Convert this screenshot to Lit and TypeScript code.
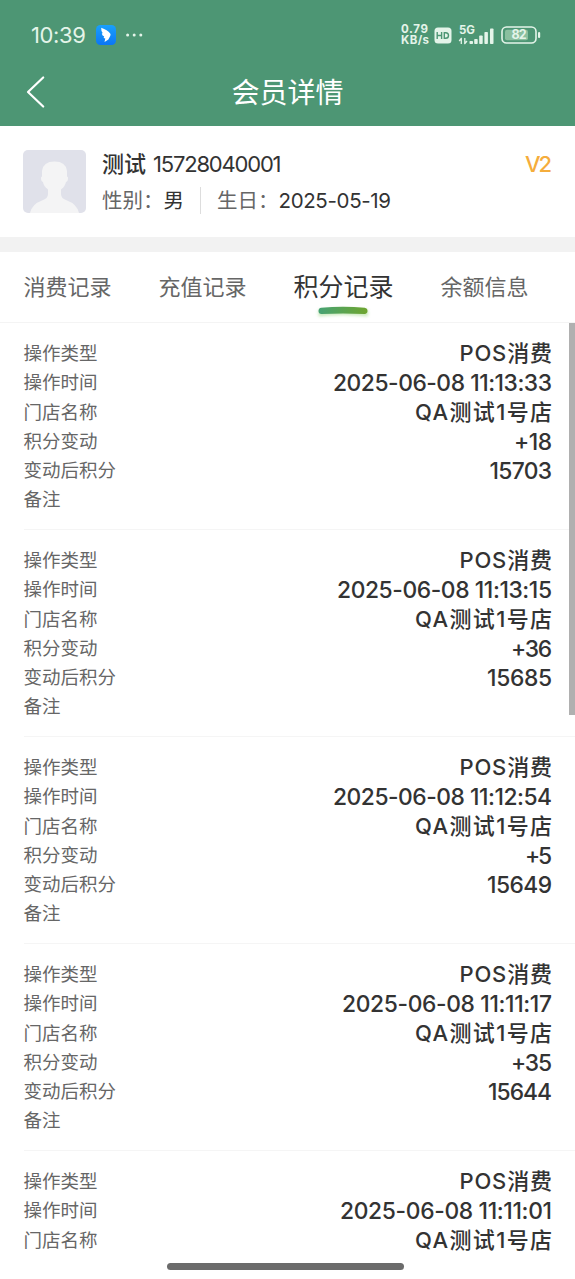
import { LitElement, html, css, svg } from "lit";
import { customElement, property } from "lit/decorators.js";

/** One line of text whose tracking is adjusted so that it fills a given width. */
@customElement("fit-text")
export class FitText extends LitElement {
  @property() text = "";
  @property({ type: Number }) width = 0;

  static styles = css`
    :host { display: inline-block; white-space: pre; text-align: left; }
    .line { display: inline-block; }
  `;

  updated() {
    const line = this.renderRoot.querySelector(".line") as HTMLElement;
    line.style.letterSpacing = "0px";
    const natural = line.getBoundingClientRect().width;
    const gap = (this.width - natural) / Math.max(1, this.text.length - 1);
    line.style.letterSpacing = `${gap}px`;
    line.style.marginRight = `${-gap}px`;
  }

  render() {
    return html`<span class="line">${this.text}</span>`;
  }
}

interface Cell { text: string; width: number; }
interface Entry { time: Cell; change?: Cell; total?: Cell; }

const c = (text: string, width: number): Cell => ({ text, width });

const TYPE = c("POS消费", 92.5);
const STORE = c("QA测试1号店", 137);

const ENTRIES: Entry[] = [
  { time: c("2025-06-08 11:13:33", 219), change: c("+18", 38), total: c("15703", 62.5) },
  { time: c("2025-06-08 11:13:15", 215), change: c("+36", 41), total: c("15685", 65) },
  { time: c("2025-06-08 11:12:54", 219), change: c("+5", 27), total: c("15649", 65) },
  { time: c("2025-06-08 11:11:17", 210), change: c("+35", 41), total: c("15644", 64) },
  { time: c("2025-06-08 11:11:01", 212) },
];

@customElement("app-root")
export class AppRoot extends LitElement {
  static styles = css`
    :host {
      display: flex;
      flex-direction: column;
      position: relative;
      box-sizing: border-box;
      width: 100%;
      height: 1279px;
      overflow: hidden;
      background: #fff;
      color: #333;
      font-family: Inter, "Noto Sans CJK SC", sans-serif;
    }
    svg { display: block; flex: none; overflow: visible; }
    .top { flex: none; height: 125.5px; background: #4d9674; color: #fff; }
    .status {
      display: flex; align-items: center; height: 70px; box-sizing: border-box;
      padding: 0 34px 0 31px; color: #e4f4e9;
    }
    .clock { font-size: 22px; font-weight: 400; margin-right: 10px; }
    .more { margin-left: 10px; }
    .spacer { flex: 1; }
    .speed { font-size: 11.5px; line-height: 11px; font-weight: 700; width: 28px; }
    .speed fit-text { display: block; }
    .hd { margin-left: 5px; }
    .signal { margin-left: 7px; }
    .battery { margin-left: 7px; }
    .nav {
      display: grid; grid-template-columns: 60px 1fr 60px; align-items: center; height: 44px;
    }
    .back { margin-left: 26px; }
    .title { text-align: center; font-size: 28px; line-height: 40px; padding-top: 1px; }

    .member {
      flex: none; display: flex; align-items: flex-start; box-sizing: border-box;
      height: 111.5px; padding: 24.5px 23px 0 23px;
    }
    .info { flex: 1; margin-left: 16px; }
    .who { display: flex; align-items: center; height: 28px; font-size: 22px; }
    .name { font-weight: 500; margin-right: 7px; font-size: 22px; line-height: 28px; margin-top: -1px; }
    .facts { display: flex; align-items: center; height: 28px; margin-top: 8.5px; font-size: 20.5px; line-height: 28px; }
    .date { font-size: 20.5px; }
    .key { color: #666; width: 61.5px; white-space: nowrap; }
    .rule { width: 1px; height: 27px; background: #ddd; margin: 0 16px; }
    .level { color: #f5ad3c; font-size: 22px; font-weight: 500; line-height: 28px; }

    .band { flex: none; height: 15px; background: #f2f2f2; }
    .tabs {
      flex: none; display: flex; box-sizing: border-box; height: 70.5px;
      padding: 0 23.5px; border-bottom: 1px solid #f4f4f4; font-size: 22px; color: #666;
    }
    .tab { display: flex; flex-direction: column; align-items: center; line-height: 70px; height: 70px; }
    .tab + .tab { margin-left: 47px; }
    .active { font-size: 25px; color: #333; }
    .active svg { margin-top: -18.5px; margin-left: -2px; }

    .list { flex: 1; min-height: 0; overflow: hidden; }
    .entry { margin-left: 23.5px; padding: 16.5px 23px 14px 0; border-bottom: 1px solid #f5f5f5; }
    .entry.partial { border-bottom: 0; padding-bottom: 0; }
    .row { display: flex; justify-content: space-between; align-items: center; height: 29.25px; line-height: 29px; }
    .label { font-size: 18.5px; color: #666; }
    .value { font-size: 22px; font-weight: 500; }
    .number { font-size: 22.8px; }

    .thumb { position: absolute; right: 0; top: 323px; width: 6px; height: 392px; background: #b0b0b0; }
    .home { position: absolute; left: 167px; top: 1263px; width: 237px; height: 7px; border-radius: 4px; background: #6b6b6b; }
  `;

  private fit(cell: Cell, cls = "") {
    return html`<fit-text class=${cls} .text=${cell.text} .width=${cell.width}></fit-text>`;
  }

  private row(label: string, cell?: Cell, cls = "value number") {
    return html`<div class="row">
      <span class="label">${label}</span>${cell ? this.fit(cell, cls) : ""}
    </div>`;
  }

  private statusIcons() {
    return html`
      <svg class="hd" width="18" height="17" viewBox="0 0 18 17">
        <rect x="0.5" y="0.5" width="17" height="16" rx="3.5" fill="#e4f4e9" />
        <path d="M3.2 5v7M7.6 5v7M3.2 8.5h4.4M10.3 5.7v5.6h1.4q2.8 0 2.8-2.8t-2.8-2.8z" fill="none" stroke="#4d9674" stroke-width="1.4" />
      </svg>
      <svg class="signal" width="35" height="21" viewBox="0 0 35 21">
        <text x="0" y="9.4" font-size="11.5" font-weight="700" fill="#e4f4e9" textLength="16">5G</text>
        <path d="M2.3 19v-6M2.7 13L.2 16M5.8 13v6M5.4 19l2.6-3" fill="none" stroke="#e4f4e9" stroke-width="1.3" />
        <g fill="#e4f4e9">
          ${[[10.5, 16], [15.2, 14], [20.2, 10.5], [25.4, 7], [31, 3.5]].map(
            ([x, y]) => svg`<rect x=${x} y=${y} width="3.5" height=${19 - y} rx="0.8" />`
          )}
        </g>
      </svg>
      <svg class="battery" width="40" height="18" viewBox="0 0 40 18">
        <rect x="1" y="1" width="34" height="16" rx="4.5" fill="none" stroke="#e4f4e9" stroke-width="1.6" />
        <rect x="4" y="3.7" width="23" height="10.6" rx="2" fill="#8abf9f" />
        <rect x="37" y="6" width="2.2" height="6" rx="1.1" fill="#e4f4e9" />
        <text x="10.5" y="13.4" font-size="12.5" font-weight="700" fill="#e4f4e9" textLength="15">82</text>
      </svg>`;
  }

  render() {
    return html`
      <header class="top">
        <div class="status">
          ${this.fit(c("10:39", 55), "clock")}
          <svg width="20" height="20" viewBox="0 0 20 20">
            <defs>
              <linearGradient id="app" x1="0" y1="0" x2="0" y2="1">
                <stop offset="0" stop-color="#19a0fb" /><stop offset="1" stop-color="#0b76f5" />
              </linearGradient>
            </defs>
            <rect width="20" height="20" rx="4.5" fill="url(#app)" />
            <path d="M5.2 2.8Q11.5 5 14.2 8.6Q15 9.8 14.2 11L12.4 14.6L8.5 17L9.3 13.6L7.6 13L8.2 11.6Q5.8 10.3 5.8 8.2L6.8 8.2Q4.9 5.6 5.2 2.8Z" fill="#fff" />
          </svg>
          <svg class="more" width="18" height="4" viewBox="0 0 18 4">
            <g fill="#e4f4e9"><circle cx="1.6" cy="2" r="1.5" /><circle cx="8.2" cy="2" r="1.5" /><circle cx="14.8" cy="2" r="1.5" /></g>
          </svg>
          <span class="spacer"></span>
          <div class="speed">${this.fit(c("0.79", 27))}${this.fit(c("KB/s", 28))}</div>
          ${this.statusIcons()}
        </div>
        <nav class="nav">
          <svg class="back" width="19" height="32" viewBox="0 0 19 32">
            <path d="M17.2 1.5L2 16L17.2 30.5" fill="none" stroke="#fff" stroke-width="2.2" stroke-linecap="round" stroke-linejoin="round" />
          </svg>
          <div class="title">会员详情</div>
        </nav>
      </header>

      <section class="member">
        <svg width="63" height="63" viewBox="0 0 63 63">
          <rect width="63" height="63" rx="5" fill="#e0e1ea" />
          <path d="M7 63Q9 54 19 50.5Q25 48.5 25 44V39.5Q20.5 36 20 32Q18 31.5 18 28Q18 26.5 19 26.5V21Q20 11.5 31.5 11.5T44 21V26.5Q45 26.5 45 28Q45 31.5 43 32Q42 36.5 38 39.5V44Q38 48.5 44 50.5Q54 54 56 63Z" fill="#f4f4f5" />
        </svg>
        <div class="info">
          <div class="who"><span class="name">测试</span>${this.fit(c("15728040001", 128.5))}</div>
          <div class="facts">
            <span class="key">性别：</span><span>男</span>
            <span class="rule"></span>
            <span class="key">生日：</span>${this.fit(c("2025-05-19", 112.5), "date")}
          </div>
        </div>
        ${this.fit(c("V2", 27), "level")}
      </section>

      <div class="band"></div>

      <div class="tabs">
        <div class="tab">消费记录</div>
        <div class="tab">充值记录</div>
        <div class="tab active">
          积分记录
          <svg width="62" height="20" viewBox="0 0 62 20">
            <defs>
              <linearGradient id="bar" x1="0" x2="1" y1="0" y2="0">
                <stop offset="0" stop-color="#46a274" /><stop offset="1" stop-color="#6ea52e" />
              </linearGradient>
              <filter id="glow" x="-20%" y="-100%" width="140%" height="400%"><feGaussianBlur stdDeviation="1.8" /></filter>
            </defs>
            <path d="M6.5 5.5Q31 3 55.5 5.5Q57 7.5 55.5 12.5Q31 9.5 6.5 12.5Z" fill="#a8dc92" opacity=".6" filter="url(#glow)" />
            <path d="M9.3 3.8Q31 1.5 52.7 3.8Q55.5 4.3 55.5 7T52.5 10Q31 8.8 9.5 10Q6.5 10 6.5 7T9.3 3.8Z" fill="url(#bar)" />
          </svg>
        </div>
        <div class="tab">余额信息</div>
      </div>

      <main class="list">
        ${ENTRIES.map(
          (e) => html`<article class="entry ${e.total ? "" : "partial"}">
            ${this.row("操作类型", TYPE, "value")}
            ${this.row("操作时间", e.time)}
            ${this.row("门店名称", STORE, "value")}
            ${e.total
              ? html`${this.row("积分变动", e.change)}${this.row("变动后积分", e.total)}${this.row("备注")}`
              : ""}
          </article>`
        )}
      </main>
      <div class="thumb"></div>
      <div class="home"></div>
    `;
  }
}
